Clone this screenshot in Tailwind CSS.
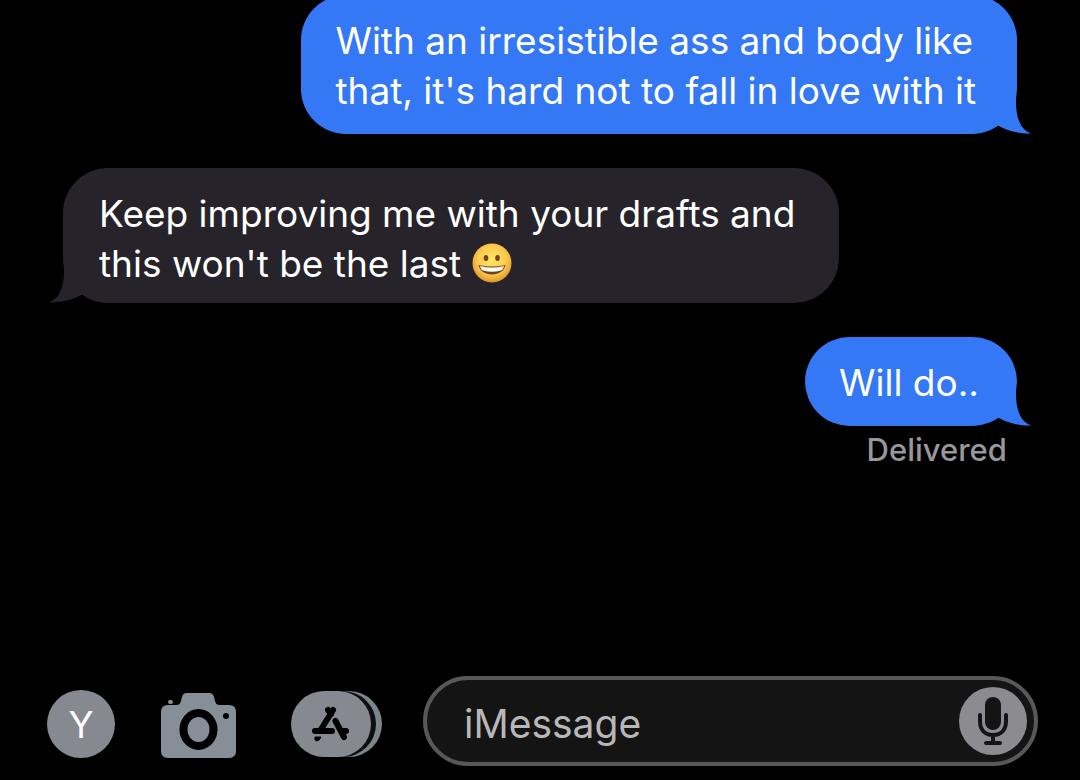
<!DOCTYPE html>
<html lang="en">
<head>
  <meta charset="UTF-8" />
  <meta name="viewport" content="width=device-width, initial-scale=1.0" />
  <title>Messages</title>
  <script src="https://cdn.jsdelivr.net/npm/@tailwindcss/browser@4"></script>
</head>
<body class="bg-black font-['Inter','Liberation_Sans',sans-serif] text-white">
  <div class="flex min-h-screen flex-col justify-between overflow-hidden">

    <!-- Conversation -->
    <main class="-mt-[5px] flex flex-col px-[63px] text-[37px] leading-[50px]">
      <div class="relative max-w-[720px] self-end rounded-[45px] bg-[#3478f6] pt-[21px] pr-[41px] pb-[18px] pl-[34px]">
        <p>With an irresistible ass and body like<br>that, it's hard not to fall in love with it</p>
        <svg class="absolute -right-[15px] bottom-0" width="47" height="46" viewBox="0 0 47 46" fill="#3478f6" aria-hidden="true">
          <path d="M31 0V14C31 30 36 43 47 45.500C33 46 20 42 12 37L4 20L18 0Z" />
        </svg>
      </div>

      <div class="relative mt-[34px] max-w-[780px] self-start rounded-[45px] bg-[#26242a] pt-[21px] pr-[44px] pb-[14px] pl-[36px]">
        <p>Keep improving me with your drafts and<br>this won't be the last <svg class="inline-block align-[-6px]" width="40" height="40" viewBox="0 0 40 40" role="img" aria-label="Grinning face">
            <defs>
              <radialGradient id="face" cx="50%" cy="42%" r="56%">
                <stop offset="0" stop-color="#ffe468" />
                <stop offset="0.65" stop-color="#fccb4c" />
                <stop offset="1" stop-color="#e39a32" />
              </radialGradient>
            </defs>
            <circle cx="20" cy="20" r="19.500" fill="url(#face)" />
            <ellipse cx="14" cy="15" rx="2.300" ry="3" fill="#70451b" />
            <ellipse cx="25.500" cy="15" rx="2.300" ry="3" fill="#70451b" />
            <path d="M6.500 22Q20 25 33.500 22C32 28 27 31.500 20 31.500S8 28 6.500 22Z" fill="#6b431f" />
            <path d="M8 23Q20 26 32 23C31.500 25 30.500 26.500 29 27.500Q20 30 11 27.500C9.500 26.500 8.500 25 8 23Z" fill="#fffdf2" />
          </svg></p>
        <svg class="absolute bottom-0 -left-[15px] -scale-x-100" width="47" height="46" viewBox="0 0 47 46" fill="#26242a" aria-hidden="true">
          <path d="M31 0V14C31 30 36 43 47 45.500C33 46 20 42 12 37L4 20L18 0Z" />
        </svg>
      </div>

      <div class="relative mt-[34px] self-end rounded-[45px] bg-[#3478f6] pt-[21px] pr-[38px] pb-[18px] pl-[34px]">
        <p>Will do..</p>
        <svg class="absolute -right-[15px] bottom-0" width="47" height="46" viewBox="0 0 47 46" fill="#3478f6" aria-hidden="true">
          <path d="M31 0V14C31 30 36 43 47 45.500C33 46 20 42 12 37L4 20L18 0Z" />
        </svg>
      </div>
      <p class="mr-[10px] self-end text-[31px] leading-[48px] font-medium text-[#98989b]">Delivered</p>
    </main>

    <!-- Composer -->
    <footer class="flex items-end pr-[42px] pb-[14px] pl-[47px]">
      <div class="flex items-end pb-2">
        <button type="button" aria-label="Profile" class="size-[68px] rounded-full bg-[#868990] text-[37px] leading-[70px]">Y</button>
        <button type="button" aria-label="Camera" class="ml-[46px]">
          <svg class="block" width="75" height="66" viewBox="0 0 75 66" fill="#868e98" aria-hidden="true">
            <rect x="7" y="8" width="5" height="4" rx="2" />
            <path d="M7 13H15C18 13 19 12 20 9L21 5C22 2 23 1 26 1H48C51 1 52 2 53 5L54 9C55 12 56 13 59 13H68Q75 13 75 20V59Q75 66 68 66H7Q0 66 0 59V20Q0 13 7 13Z" />
            <ellipse cx="37.500" cy="37.500" rx="15" ry="16.500" stroke="#000" stroke-width="8" />
            <circle cx="65" cy="24" r="3" fill="#000" />
          </svg>
        </button>
        <button type="button" aria-label="Apps" class="ml-[55px]">
          <svg class="block" width="91" height="68" viewBox="0 0 91 68" aria-hidden="true">
            <rect x="12" y="1" width="79" height="66" rx="33" fill="#7c858a" />
            <rect x="5" y="1" width="80" height="66" rx="33" fill="#0d0e11" />
            <rect x="0" y="1" width="80" height="66" rx="33" fill="#868990" />
            <g stroke="#000" stroke-width="6" stroke-linecap="round" fill="none">
              <path d="M42 20L29 41" />
              <path d="M37 20L40 24" />
              <path d="M44.500 31L53 47" />
              <path d="M24 41H41" />
              <path d="M50 41H55" />
            </g>
            <path d="M24 47H30L28 50Q26 52 24 50Z" stroke="#000" stroke-width="1" />
          </svg>
        </button>
      </div>

      <div class="ml-[41px] flex h-[90px] min-w-0 flex-1 items-center rounded-full border-4 border-[#58585a] bg-[#141414] pr-[7px] pl-[37px]">
        <input type="text" aria-label="iMessage" placeholder="iMessage" class="min-w-0 flex-1 bg-transparent pt-[6px] text-[39px] leading-[50px] outline-none placeholder:text-[#b8b8b8]" />
        <button type="button" aria-label="Dictate" class="shrink-0">
          <svg class="block" width="68" height="68" viewBox="0 0 68 68" aria-hidden="true">
            <circle cx="34" cy="34" r="34" fill="#8c8b90" />
            <rect x="26" y="10" width="16" height="33" rx="8" fill="#141414" />
            <path d="M21 28V34C21 43 26 48 34 48S47 43 47 34V28M34 48V56M27 56H41" fill="none" stroke="#141414" stroke-width="4" stroke-linecap="round" />
          </svg>
        </button>
      </div>
    </footer>
  </div>
</body>
</html>
